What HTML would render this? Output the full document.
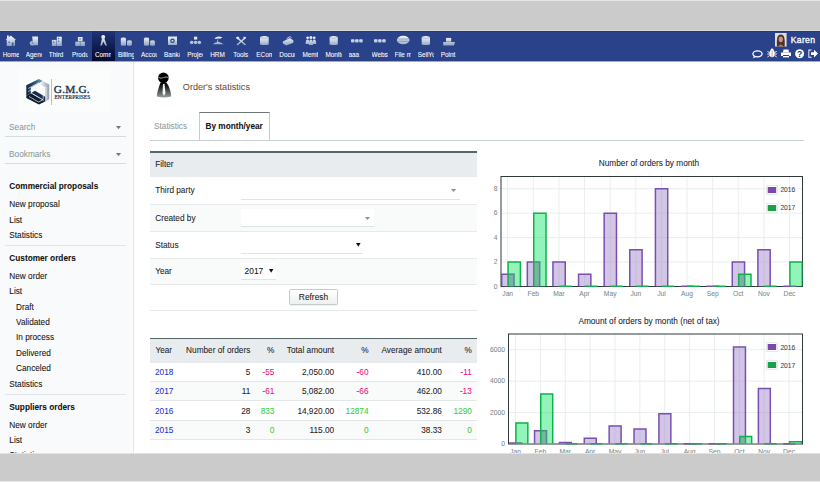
<!DOCTYPE html>
<html><head><meta charset="utf-8">
<style>
html,body{margin:0;padding:0;}
body{width:820px;height:482px;position:relative;overflow:hidden;background:#fff;font-family:"Liberation Sans", sans-serif;}
.t{position:absolute;white-space:nowrap;line-height:10px;-webkit-text-stroke:0.06px currentColor;}
</style></head><body>
<div style="position:absolute;left:0px;top:0px;width:820px;height:31px;background:#cbcbcb;"></div>
<div style="position:absolute;left:0px;top:0px;width:820px;height:1px;background:#e6e6e6;"></div>
<div style="position:absolute;left:0px;top:30px;width:820px;height:1px;background:#d8d8d6;"></div>
<div style="position:absolute;left:0px;top:31px;width:820px;height:30px;background:#29428a;"></div>
<div style="position:absolute;left:0px;top:61px;width:820px;height:1px;background:rgba(40,66,135,0.45);"></div>
<div style="position:absolute;left:0px;top:31px;width:820px;height:1px;background:#223a80;"></div>
<div style="position:absolute;left:92.00px;top:31px;width:22.65px;height:30px;background:linear-gradient(#1f3378,#040a2c);"></div>

<svg style="position:absolute;left:0;top:0" width="470" height="61" viewBox="0 0 470 61">
<defs><linearGradient id="ig" gradientUnits="userSpaceOnUse" x1="0" y1="35" x2="0" y2="46.5"><stop offset="0" stop-color="#f6f8fb"/><stop offset="0.45" stop-color="#cfd9e6"/><stop offset="1" stop-color="#8499bb"/></linearGradient></defs>
<g fill="url(#ig)">
<!-- Home -->
<path d="M5.6 40 L7 38.6 V35.5 H8.8 V37.2 L10.8 35.6 L16.1 40 H14.9 V46 H6.7 V40 Z"/>
<!-- Agenda -->
<path d="M32.2 36.4 H38 V45.2 H33 Z"/><circle cx="32.2" cy="43.3" r="2.4"/>
<!-- Third -->
<rect x="56.8" y="36.7" width="5" height="9.3"/><rect x="51.9" y="39.9" width="4.6" height="6.1"/>
<!-- Produ -->
<rect x="77.9" y="37" width="4.7" height="4.4"/><rect x="75.3" y="41.7" width="4.6" height="4.3"/><rect x="80.3" y="41.7" width="4.6" height="4.3"/>
<!-- Comm -->
<circle cx="103.2" cy="36.9" r="2"/><path d="M102 38.6 H104.4 L107 45.6 H105.3 L103.2 41.5 L102 45.6 H100.3 Z"/>
<!-- Billing -->
<ellipse cx="123.4" cy="38.7" rx="2.6" ry="1.1"/><rect x="120.8" y="38.7" width="5.2" height="6.4"/><ellipse cx="123.4" cy="45.1" rx="2.6" ry="0.6"/><ellipse cx="129.4" cy="41.3" rx="2.4" ry="1.0"/><rect x="127.0" y="41.3" width="4.8" height="3.8"/><ellipse cx="129.4" cy="45.1" rx="2.4" ry="0.6"/>
<!-- Accou -->
<ellipse cx="146.5" cy="38.7" rx="2.6" ry="1.1"/><rect x="143.9" y="38.7" width="5.2" height="6.4"/><ellipse cx="146.5" cy="45.1" rx="2.6" ry="0.6"/><ellipse cx="152.5" cy="41.3" rx="2.4" ry="1.0"/><rect x="150.1" y="41.3" width="4.8" height="3.8"/><ellipse cx="152.5" cy="45.1" rx="2.4" ry="0.6"/>
<!-- Bank -->
<path fill-rule="evenodd" d="M168 36.4 H177 V45.1 H168 Z M172.5 38.5 A2.3 2.3 0 1 0 172.5 43.1 A2.3 2.3 0 1 0 172.5 38.5 Z"/><circle cx="172.5" cy="40.8" r="1.1"/>
<!-- Proje -->
<rect x="194" y="36.7" width="3.2" height="2.9"/><circle cx="191.7" cy="42.5" r="1.8"/><circle cx="195.6" cy="42.5" r="1.8"/><circle cx="199.3" cy="42.5" r="1.8"/>
<!-- HRM -->
<path d="M214.5 38.2 Q218 35.2 222.5 37.5 L220 38.8 Q217.5 38 215.5 39 Z"/><path d="M218 38.6 L217 42 L218.2 42 Z"/><path d="M212.7 44.3 Q216 41.5 219 42 Q221.5 43 223.8 44.3 Z"/>
</g>
<g fill="#3a5290" opacity="0.85">
<rect x="8.3" y="41.6" width="1.6" height="1.2"/><rect x="11.8" y="42.4" width="1.8" height="3.6"/>
<rect x="58" y="38" width="1.2" height="1.2"/><rect x="58" y="40.6" width="1.2" height="1.2"/><rect x="53" y="41.5" width="1.2" height="1.2"/>
<rect x="79.5" y="38.3" width="1.2" height="1.2"/>
<path d="M32.2 41.6 V43.3 H33.6" stroke="#3a5290" stroke-width="0.6" fill="none"/>

</g>
<g fill="url(#ig)">

</g>
<g stroke="url(#ig)" stroke-width="1.6" fill="none">
<!-- Tools -->
<path d="M237 37.5 L245.5 45"/><path d="M245.5 37.5 L237 45"/>
</g>
<g fill="url(#ig)">
<path d="M235.8 37.6 L238.2 36.4 L239.6 38.2 L237.4 39.6 Z"/><path d="M243 36.8 L246.2 37 L244.6 39.4 Z"/>
<!-- ECon -->
<path d="M260 37 Q264.35 35.2 268.7 37 V44.4 Q264.35 45.6 260 44.4 Z"/>
<!-- Docu -->
<path d="M282.8 41.5 L289.8 38 L293.3 40.3 L293.3 42.8 L286.3 45.5 L282.8 43.5 Z"/>
<path d="M286.5 38.5 L290 36.7 L291.5 37.6" stroke="url(#ig)" stroke-width="0.8" fill="none"/>
<!-- Memb -->
<circle cx="307.6" cy="37.8" r="1.4"/><circle cx="314.2" cy="37.8" r="1.4"/><circle cx="310.9" cy="37.4" r="1.5"/>
<path d="M305.6 44 Q305.6 39.6 307.6 39.6 Q309.4 39.6 309.4 44 Z"/>
<path d="M312.4 44 Q312.4 39.6 314.2 39.6 Q316.2 39.6 316.2 44 Z"/>
<path d="M308.8 44.9 Q308.8 39.4 310.9 39.4 Q313 39.4 313 44.9 Z"/>
<!-- Monit -->
<path d="M329.6 37 Q333.7 35.2 337.8 37 V44.4 Q333.7 45.6 329.6 44.4 Z"/>
<!-- aaa -->
<rect x="351" y="39.3" width="3.5" height="3.2" rx="0.8"/><rect x="355.1" y="39.3" width="3.5" height="3.2" rx="0.8"/><rect x="359.2" y="39.3" width="3.5" height="3.2" rx="0.8"/>
<!-- Webs -->
<rect x="374" y="39.3" width="3.5" height="3.2" rx="0.8"/><rect x="378.1" y="39.3" width="3.5" height="3.2" rx="0.8"/><rect x="382.2" y="39.3" width="3.5" height="3.2" rx="0.8"/>
<!-- File -->
<ellipse cx="403.2" cy="40" rx="6.3" ry="4.3"/>
<!-- SellYo -->
<path d="M421.7 37 Q425.85 35.2 430 37 V44.4 Q425.85 45.6 421.7 44.4 Z"/>
<!-- Point -->
<rect x="446" y="37.9" width="5.2" height="3.8"/><path d="M443.2 42 H455 L454 45.5 H443.2 Z"/>
</g>
<path d="M397.5 39 H409 M397.5 41.2 H409" stroke="#5a70a0" stroke-width="0.6" fill="none"/><path d="M260 37.6 Q264.35 39 268.7 37.6 M329.6 37.6 Q333.7 39 337.8 37.6 M421.7 37.6 Q425.85 39 430 37.6" stroke="#7d90b5" stroke-width="0.5" fill="none"/>
</svg>
<div class="t" style="left:2.75px;width:16.1px;overflow:hidden;top:49.75px;font-size:6.4px;color:#fff;">Home</div>
<div class="t" style="left:25.80px;width:16.1px;overflow:hidden;top:49.75px;font-size:6.4px;color:#fff;">Agenda</div>
<div class="t" style="left:48.85px;width:16.1px;overflow:hidden;top:49.75px;font-size:6.4px;color:#fff;">Third parties</div>
<div class="t" style="left:71.90px;width:16.1px;overflow:hidden;top:49.75px;font-size:6.4px;color:#fff;">Products</div>
<div class="t" style="left:94.95px;width:16.1px;overflow:hidden;top:49.75px;font-size:6.4px;color:#fff;">Commercial</div>
<div class="t" style="left:118.00px;width:16.1px;overflow:hidden;top:49.75px;font-size:6.4px;color:#fff;">Billing</div>
<div class="t" style="left:141.05px;width:16.1px;overflow:hidden;top:49.75px;font-size:6.4px;color:#fff;">Accounting</div>
<div class="t" style="left:164.10px;width:16.1px;overflow:hidden;top:49.75px;font-size:6.4px;color:#fff;">Bank/Cash</div>
<div class="t" style="left:187.15px;width:16.1px;overflow:hidden;top:49.75px;font-size:6.4px;color:#fff;">Projects</div>
<div class="t" style="left:210.20px;width:16.1px;overflow:hidden;top:49.75px;font-size:6.4px;color:#fff;">HRM</div>
<div class="t" style="left:233.25px;width:16.1px;overflow:hidden;top:49.75px;font-size:6.4px;color:#fff;">Tools</div>
<div class="t" style="left:256.30px;width:16.1px;overflow:hidden;top:49.75px;font-size:6.4px;color:#fff;">ECommerce</div>
<div class="t" style="left:279.35px;width:16.1px;overflow:hidden;top:49.75px;font-size:6.4px;color:#fff;">Documents</div>
<div class="t" style="left:302.40px;width:16.1px;overflow:hidden;top:49.75px;font-size:6.4px;color:#fff;">Members</div>
<div class="t" style="left:325.45px;width:16.1px;overflow:hidden;top:49.75px;font-size:6.4px;color:#fff;">Monitoring</div>
<div class="t" style="left:348.50px;width:16.1px;overflow:hidden;top:49.75px;font-size:6.4px;color:#fff;">aaa</div>
<div class="t" style="left:371.55px;width:16.1px;overflow:hidden;top:49.75px;font-size:6.4px;color:#fff;">Websites</div>
<div class="t" style="left:394.60px;width:16.1px;overflow:hidden;top:49.75px;font-size:6.4px;color:#fff;">File manager</div>
<div class="t" style="left:417.65px;width:16.1px;overflow:hidden;top:49.75px;font-size:6.4px;color:#fff;">SellYourSaas</div>
<div class="t" style="left:440.70px;width:16.1px;overflow:hidden;top:49.75px;font-size:6.4px;color:#fff;">Point of sale</div>
<svg style="position:absolute;left:775px;top:33px" width="11.6" height="13.5" viewBox="0 0 12 14" preserveAspectRatio="none">
<rect width="12" height="14" fill="#e2ddd8"/>
<path d="M2 14 Q1.5 6 3 3 Q6 0 9 3 Q10.5 6 10 14 Z" fill="#4a3428"/>
<ellipse cx="6" cy="6.5" rx="2.2" ry="3" fill="#c8958a"/>
<path d="M3.5 14 Q6 10 8.5 14 Z" fill="#b08070"/>
</svg>
<div class="t" style="left:790.70px;top:35.25px;font-size:8.6px;color:#fff;letter-spacing:0.35px;-webkit-text-stroke:0.3px #fff;">Karen</div>
<svg style="position:absolute;left:748px;top:46px" width="72" height="16" viewBox="748 46 72 16">
<g fill="none" stroke="#fff" stroke-width="1.3">
<ellipse cx="757.5" cy="53.8" rx="4.6" ry="3"/>
</g>
<path d="M754 56 L752.8 58.6 L756.5 56.6 Z" fill="#fff"/>
<g fill="#fff">
<ellipse cx="772.1" cy="53.5" rx="2.7" ry="3.8"/>
<circle cx="772.1" cy="49.8" r="1.4"/>
</g>
<g stroke="#fff" stroke-width="0.9">
<path d="M767.5 51.5 L769.5 52.5 M767.3 54 H769.5 M767.5 57 L769.5 55.5 M776.7 51.5 L774.7 52.5 M776.9 54 H774.7 M776.7 57 L774.7 55.5"/>
</g>
<path d="M772.1 50.5 V57" stroke="#c05050" stroke-width="0.6"/>
<g fill="#fff">
<path d="M783.5 49.5 H788.5 L789 52.5 H783 Z"/>
<path d="M781 52.5 H791 V56 H789 V55 H783 V56 H781 Z"/>
<rect x="783" y="56" width="6" height="1.4"/>
</g>
<circle cx="799.6" cy="53.7" r="4.5" fill="#fff"/>
<text x="799.7" y="56.9" font-family="Liberation Sans" font-weight="bold" font-size="8.6" fill="#1d2f66" text-anchor="middle">?</text>
<g fill="#fff">
<path d="M811.5 50.5 H809.3 V56.8 H811.5 V57.8 H808.4 V49.5 H811.5 Z"/>
<path d="M811 52.2 H814 V49.8 L818 53.6 L814 57.4 V55 H811 Z"/>
</g>
</svg>
<div style="position:absolute;left:0px;top:62px;width:133px;height:391px;background:#f9fafb;"></div>
<div style="position:absolute;left:133px;top:62px;width:1px;height:391px;background:#e4e7e8;"></div>
<div style="position:absolute;left:19px;top:69px;width:92px;height:43px;background:#fbfcfc;"></div>
<svg style="position:absolute;left:0;top:61px" width="133" height="60" viewBox="0 61 133 60">
<defs>
<linearGradient id="lgA" gradientUnits="userSpaceOnUse" x1="26" y1="0" x2="43" y2="0"><stop offset="0" stop-color="#102238"/><stop offset="0.5" stop-color="#2a5575"/><stop offset="1" stop-color="#7fa6bd"/></linearGradient>
<linearGradient id="lgB" gradientUnits="userSpaceOnUse" x1="41" y1="0" x2="50" y2="0"><stop offset="0" stop-color="#e6ecee"/><stop offset="1" stop-color="#8b9ba3"/></linearGradient>
</defs>
<polygon points="26.3,85.3 38.9,79 42.8,81 30.8,87.6 30.8,93.2 26.3,95.8" fill="url(#lgA)"/>
<polygon points="42.8,81 49.2,84.6 49.2,99.2 45.2,101.6 45.2,87.2 40.6,84.6" fill="url(#lgB)"/>
<polygon points="26.3,95.8 30.8,93.2 45.2,101.6 38.9,104.5 26.3,97.9" fill="#0e1d31"/>
<polygon points="31.5,92.8 35,90.8 45.2,96.8 45.2,101.6" fill="#16304a"/>
<g stroke="#eef3f5" stroke-width="0.7" fill="none">
<path d="M28.2 88.5 L39 82.6 M28.2 91.5 L35.5 87.5 V90"/>
<path d="M43.2 86 V99.5 M46.2 86.5 V99.8"/>
<path d="M29 96.5 L38.5 102 L43 99.8 L33.5 94.3"/>
</g>
<rect x="51.2" y="79" width="0.8" height="26" fill="#a7b5bf"/>
</svg>
<div class="t" style="left:53.8px;top:84.28px;font-family:'Liberation Serif',serif;font-size:11.3px;color:#1a2f4a;letter-spacing:0.2px;-webkit-text-stroke:0.35px #1a2f4a;">G.M.G.</div>
<div class="t" style="left:54.5px;top:91.90px;font-family:'Liberation Serif',serif;font-size:5.3px;color:#1a2f4a;letter-spacing:0.12px;-webkit-text-stroke:0.2px #1a2f4a;">ENTERPRISES</div>
<div class="t" style="left:9.10px;top:122.75px;font-size:8.25px;color:#8c9a9c;">Search</div>
<div style="position:absolute;left:5px;top:136px;width:121px;height:1px;background:#d5dcdc;"></div>
<div class="t" style="left:9.10px;top:149.75px;font-size:8.25px;color:#8c9a9c;">Bookmarks</div>
<div style="position:absolute;left:5px;top:163px;width:121px;height:1px;background:#d5dcdc;"></div>
<svg style="position:absolute;left:116px;top:125.8px" width="6" height="4"><path d="M0 0 H5 L2.5 3.2 Z" fill="#6f7a7c"/></svg>
<svg style="position:absolute;left:116px;top:152.8px" width="6" height="4"><path d="M0 0 H5 L2.5 3.2 Z" fill="#6f7a7c"/></svg>
<div class="t" style="left:9.30px;top:181.75px;font-size:8.25px;color:#111;font-weight:bold;">Commercial proposals</div>
<div class="t" style="left:9.30px;top:199.75px;font-size:8.25px;color:#111;">New proposal</div>
<div class="t" style="left:9.30px;top:215.75px;font-size:8.25px;color:#111;">List</div>
<div class="t" style="left:9.30px;top:230.75px;font-size:8.25px;color:#111;">Statistics</div>
<div class="t" style="left:9.30px;top:253.75px;font-size:8.25px;color:#111;font-weight:bold;">Customer orders</div>
<div class="t" style="left:9.30px;top:271.75px;font-size:8.25px;color:#111;">New order</div>
<div class="t" style="left:9.30px;top:286.75px;font-size:8.25px;color:#111;">List</div>
<div class="t" style="left:16.00px;top:302.75px;font-size:8.25px;color:#111;">Draft</div>
<div class="t" style="left:16.00px;top:317.75px;font-size:8.25px;color:#111;">Validated</div>
<div class="t" style="left:16.00px;top:332.75px;font-size:8.25px;color:#111;">In process</div>
<div class="t" style="left:16.00px;top:348.75px;font-size:8.25px;color:#111;">Delivered</div>
<div class="t" style="left:16.00px;top:363.75px;font-size:8.25px;color:#111;">Canceled</div>
<div class="t" style="left:9.30px;top:379.75px;font-size:8.25px;color:#111;">Statistics</div>
<div class="t" style="left:9.30px;top:402.75px;font-size:8.25px;color:#111;font-weight:bold;">Suppliers orders</div>
<div class="t" style="left:9.30px;top:420.75px;font-size:8.25px;color:#111;">New order</div>
<div class="t" style="left:9.30px;top:435.75px;font-size:8.25px;color:#111;">List</div>
<div class="t" style="left:9.30px;top:450.75px;font-size:8.25px;color:#111;">Statistics</div>
<div style="position:absolute;left:5px;top:245px;width:121px;height:1px;background:#e3e6e8;"></div>
<div style="position:absolute;left:5px;top:394px;width:121px;height:1px;background:#e3e6e8;"></div>
<svg style="position:absolute;left:155px;top:71px" width="19" height="28" viewBox="0 0 19 28">
<defs><linearGradient id="pg" x1="0" y1="0" x2="0" y2="1"><stop offset="0" stop-color="#000"/><stop offset="0.25" stop-color="#1a1a1a"/><stop offset="1" stop-color="#93a3a3"/></linearGradient></defs>
<circle cx="8.4" cy="6.8" r="5.3" fill="#000"/>
<path d="M3.5 6.5 Q6 8 8.5 6.5 Q11 5.5 13.5 6.5" stroke="#b8c0c0" stroke-width="0.8" fill="none"/>
<path d="M5.5 11.5 L11.5 11.5 Q13.5 14 15 19 Q16.5 24 16 25.5 Q8.5 27.5 2 25.5 Q1.5 24 3 19 Q4.5 14 5.5 11.5 Z" fill="url(#pg)"/>
<path d="M8 13 L9.5 13 L10.5 22 L9 25 L7.5 22 Z" fill="#fff" opacity="0.95"/>
</svg>
<div class="t" style="left:182.80px;top:82.25px;font-size:9.15px;color:#6e5035;">Order's statistics</div>
<div class="t" style="left:154.00px;top:121.75px;font-size:8.25px;color:#8e9a9a;">Statistics</div>
<div style="position:absolute;left:199px;top:112px;width:70.5px;height:28px;box-sizing:border-box;border:1px solid #c5cccc;border-top:1px solid #6e7878;border-bottom:none;background:#fff;"></div>
<div class="t" style="left:205.50px;top:121.75px;font-size:8.25px;color:#111;font-weight:bold;">By month/year</div>
<div style="position:absolute;left:150px;top:140px;width:654px;height:1px;background:#c9d0d0;"></div>
<div style="position:absolute;left:150px;top:151px;width:327px;height:1.5px;background:#56676a;"></div>
<div style="position:absolute;left:150px;top:152.5px;width:327px;height:24px;background:#e9ecef;"></div>
<div class="t" style="left:155.20px;top:159.75px;font-size:8.25px;color:#222;">Filter</div>
<div style="position:absolute;left:150px;top:176.5px;width:327px;height:27.5px;background:#fff;"></div>
<div style="position:absolute;left:150px;top:204px;width:327px;height:27px;background:#f9fafa;"></div>
<div style="position:absolute;left:150px;top:231px;width:327px;height:27px;background:#fff;"></div>
<div style="position:absolute;left:150px;top:258px;width:327px;height:26px;background:#f9fafa;"></div>
<div style="position:absolute;left:150px;top:284px;width:327px;height:26px;background:#fff;"></div>
<div style="position:absolute;left:150px;top:204px;width:327px;height:1px;background:#e6eaea;"></div>
<div style="position:absolute;left:150px;top:231px;width:327px;height:1px;background:#e6eaea;"></div>
<div style="position:absolute;left:150px;top:258px;width:327px;height:1px;background:#e6eaea;"></div>
<div style="position:absolute;left:150px;top:284px;width:327px;height:1px;background:#e6eaea;"></div>
<div style="position:absolute;left:150px;top:310px;width:327px;height:1px;background:#e6eaea;"></div>
<div class="t" style="left:155.20px;top:185.75px;font-size:8.25px;color:#222;">Third party</div>
<div class="t" style="left:155.20px;top:213.75px;font-size:8.25px;color:#222;">Created by</div>
<div class="t" style="left:155.20px;top:240.75px;font-size:8.25px;color:#222;">Status</div>
<div class="t" style="left:155.20px;top:266.75px;font-size:8.25px;color:#222;">Year</div>
<div style="position:absolute;left:241px;top:182px;width:219px;height:18px;background:#fff;border-bottom:1px solid #dfe4e4;box-sizing:border-box;"></div>
<div style="position:absolute;left:241px;top:209px;width:133px;height:18px;background:#fff;border-bottom:1px solid #dfe4e4;box-sizing:border-box;"></div>
<div style="position:absolute;left:241px;top:236px;width:122px;height:18px;background:#fff;border-bottom:1px solid #dfe4e4;box-sizing:border-box;"></div>
<div style="position:absolute;left:241px;top:263px;width:35px;height:17px;background:#fff;border-bottom:1px solid #dfe4e4;box-sizing:border-box;"></div>
<svg style="position:absolute;left:451px;top:188.9px" width="6" height="4"><path d="M0 0 H5.2 L2.6 3.1 Z" fill="#849494"/></svg>
<svg style="position:absolute;left:365.2px;top:216.7px" width="6" height="4"><path d="M0 0 H5 L2.5 3 Z" fill="#849494"/></svg>
<svg style="position:absolute;left:355.8px;top:243px" width="6" height="5"><path d="M0 0 H4.6 L2.3 3.8 Z" fill="#111"/></svg>
<div class="t" style="left:244.60px;top:266.25px;font-size:8.4px;color:#111;">2017</div>
<svg style="position:absolute;left:268.7px;top:269.1px" width="6" height="5"><path d="M0 0 H4.4 L2.2 3.8 Z" fill="#111"/></svg>
<div style="position:absolute;left:289px;top:289.3px;width:48.8px;height:15.5px;box-sizing:border-box;border:1px solid #c5caca;border-radius:1.5px;background:linear-gradient(#fff,#eef0f0);box-shadow:0 0.5px 0.5px rgba(0,0,0,0.12);"></div>
<div class="t" style="left:213.50px;width:200px;text-align:center;top:292.25px;font-size:8.4px;color:#222;">Refresh</div>
<div style="position:absolute;left:150px;top:337.5px;width:327px;height:1.5px;background:#56676a;"></div>
<div style="position:absolute;left:150px;top:339px;width:327px;height:23.5px;background:#e9ecef;"></div>
<div class="t" style="left:155.40px;top:345.75px;font-size:8.25px;color:#222;">Year</div>
<div class="t" style="right:569.70px;top:345.75px;font-size:8.25px;color:#222;">Number of orders</div>
<div class="t" style="right:545.60px;top:345.75px;font-size:8.25px;color:#222;">%</div>
<div class="t" style="right:485.90px;top:345.75px;font-size:8.25px;color:#222;">Total amount</div>
<div class="t" style="right:451.50px;top:345.75px;font-size:8.25px;color:#222;">%</div>
<div class="t" style="right:378.10px;top:345.75px;font-size:8.25px;color:#222;">Average amount</div>
<div class="t" style="right:348.20px;top:345.75px;font-size:8.25px;color:#222;">%</div>
<div style="position:absolute;left:150px;top:362.5px;width:327px;height:19.0px;background:#fff;"></div>
<div style="position:absolute;left:150px;top:380.5px;width:327px;height:1px;background:#e3e7e7;"></div>
<div class="t" style="left:155.00px;top:367.75px;font-size:8.25px;color:#2233c8;">2018</div>
<div class="t" style="right:569.70px;top:367.75px;font-size:8.25px;color:#222;">5</div>
<div class="t" style="right:545.60px;top:367.75px;font-size:8.25px;color:#ee0a80;">-55</div>
<div class="t" style="right:485.90px;top:367.75px;font-size:8.25px;color:#222;">2,050.00</div>
<div class="t" style="right:451.50px;top:367.75px;font-size:8.25px;color:#ee0a80;">-60</div>
<div class="t" style="right:378.10px;top:367.75px;font-size:8.25px;color:#222;">410.00</div>
<div class="t" style="right:348.20px;top:367.75px;font-size:8.25px;color:#ee0a80;">-11</div>
<div style="position:absolute;left:150px;top:381.5px;width:327px;height:19.5px;background:#f9fafa;"></div>
<div style="position:absolute;left:150px;top:400px;width:327px;height:1px;background:#e3e7e7;"></div>
<div class="t" style="left:155.00px;top:386.75px;font-size:8.25px;color:#2233c8;">2017</div>
<div class="t" style="right:569.70px;top:386.75px;font-size:8.25px;color:#222;">11</div>
<div class="t" style="right:545.60px;top:386.75px;font-size:8.25px;color:#ee0a80;">-61</div>
<div class="t" style="right:485.90px;top:386.75px;font-size:8.25px;color:#222;">5,082.00</div>
<div class="t" style="right:451.50px;top:386.75px;font-size:8.25px;color:#ee0a80;">-66</div>
<div class="t" style="right:378.10px;top:386.75px;font-size:8.25px;color:#222;">462.00</div>
<div class="t" style="right:348.20px;top:386.75px;font-size:8.25px;color:#ee0a80;">-13</div>
<div style="position:absolute;left:150px;top:401px;width:327px;height:19.5px;background:#fff;"></div>
<div style="position:absolute;left:150px;top:419.5px;width:327px;height:1px;background:#e3e7e7;"></div>
<div class="t" style="left:155.00px;top:406.75px;font-size:8.25px;color:#2233c8;">2016</div>
<div class="t" style="right:569.70px;top:406.75px;font-size:8.25px;color:#222;">28</div>
<div class="t" style="right:545.60px;top:406.75px;font-size:8.25px;color:#38cc38;">833</div>
<div class="t" style="right:485.90px;top:406.75px;font-size:8.25px;color:#222;">14,920.00</div>
<div class="t" style="right:451.50px;top:406.75px;font-size:8.25px;color:#38cc38;">12874</div>
<div class="t" style="right:378.10px;top:406.75px;font-size:8.25px;color:#222;">532.86</div>
<div class="t" style="right:348.20px;top:406.75px;font-size:8.25px;color:#38cc38;">1290</div>
<div style="position:absolute;left:150px;top:420.5px;width:327px;height:19.0px;background:#f9fafa;"></div>
<div style="position:absolute;left:150px;top:438.5px;width:327px;height:1px;background:#e3e7e7;"></div>
<div class="t" style="left:155.00px;top:425.75px;font-size:8.25px;color:#2233c8;">2015</div>
<div class="t" style="right:569.70px;top:425.75px;font-size:8.25px;color:#222;">3</div>
<div class="t" style="right:545.60px;top:425.75px;font-size:8.25px;color:#38cc38;">0</div>
<div class="t" style="right:485.90px;top:425.75px;font-size:8.25px;color:#222;">115.00</div>
<div class="t" style="right:451.50px;top:425.75px;font-size:8.25px;color:#38cc38;">0</div>
<div class="t" style="right:378.10px;top:425.75px;font-size:8.25px;color:#222;">38.33</div>
<div class="t" style="right:348.20px;top:425.75px;font-size:8.25px;color:#38cc38;">0</div>
<div class="t" style="left:549.00px;width:200px;text-align:center;top:158.75px;font-size:8.25px;color:#1e2230;">Number of orders by month</div>
<svg style="position:absolute;left:0;top:0" width="820" height="482"><line x1="507.70" y1="176.5" x2="507.70" y2="286.5" stroke="#e9eeee" stroke-width="1"/><line x1="533.32" y1="176.5" x2="533.32" y2="286.5" stroke="#e9eeee" stroke-width="1"/><line x1="558.94" y1="176.5" x2="558.94" y2="286.5" stroke="#e9eeee" stroke-width="1"/><line x1="584.56" y1="176.5" x2="584.56" y2="286.5" stroke="#e9eeee" stroke-width="1"/><line x1="610.18" y1="176.5" x2="610.18" y2="286.5" stroke="#e9eeee" stroke-width="1"/><line x1="635.80" y1="176.5" x2="635.80" y2="286.5" stroke="#e9eeee" stroke-width="1"/><line x1="661.42" y1="176.5" x2="661.42" y2="286.5" stroke="#e9eeee" stroke-width="1"/><line x1="687.04" y1="176.5" x2="687.04" y2="286.5" stroke="#e9eeee" stroke-width="1"/><line x1="712.66" y1="176.5" x2="712.66" y2="286.5" stroke="#e9eeee" stroke-width="1"/><line x1="738.28" y1="176.5" x2="738.28" y2="286.5" stroke="#e9eeee" stroke-width="1"/><line x1="763.90" y1="176.5" x2="763.90" y2="286.5" stroke="#e9eeee" stroke-width="1"/><line x1="789.52" y1="176.5" x2="789.52" y2="286.5" stroke="#e9eeee" stroke-width="1"/><line x1="501" y1="262.06" x2="802.5" y2="262.06" stroke="#e9eeee" stroke-width="1"/><line x1="501" y1="237.61" x2="802.5" y2="237.61" stroke="#e9eeee" stroke-width="1"/><line x1="501" y1="213.17" x2="802.5" y2="213.17" stroke="#e9eeee" stroke-width="1"/><line x1="501" y1="188.72" x2="802.5" y2="188.72" stroke="#e9eeee" stroke-width="1"/><rect x="501" y="176.5" width="301.5" height="110.0" fill="none" stroke="#2f3a3a" stroke-width="1"/><clipPath id="cp176"><rect x="501" y="176.5" width="301.5" height="111.0"/></clipPath><g clip-path="url(#cp176)"><g fill="rgba(155,128,199,0.45)"><rect x="501.69" y="274.28" width="12.31" height="12.22"/><rect x="527.31" y="262.06" width="12.31" height="24.44"/><rect x="552.93" y="262.06" width="12.31" height="24.44"/><rect x="578.55" y="274.28" width="12.31" height="12.22"/><rect x="604.17" y="213.17" width="12.31" height="73.33"/><rect x="629.79" y="249.83" width="12.31" height="36.67"/><rect x="655.41" y="188.72" width="12.31" height="97.78"/><rect x="732.27" y="262.06" width="12.31" height="24.44"/><rect x="757.89" y="249.83" width="12.31" height="36.67"/></g><g fill="none" stroke="#7b4fb0" stroke-width="1.5"><path d="M501.69 286.00 V274.28 H514.00 V286.00"/><path d="M527.31 286.00 V262.06 H539.62 V286.00"/><path d="M552.93 286.00 V262.06 H565.24 V286.00"/><path d="M578.55 286.00 V274.28 H590.86 V286.00"/><path d="M604.17 286.00 V213.17 H616.48 V286.00"/><path d="M629.79 286.00 V249.83 H642.10 V286.00"/><path d="M655.41 286.00 V188.72 H667.72 V286.00"/><path d="M681.03 286.30 H693.34"/><path d="M706.65 286.30 H718.96"/><path d="M732.27 286.00 V262.06 H744.58 V286.00"/><path d="M757.89 286.00 V249.83 H770.20 V286.00"/><path d="M783.51 286.30 H795.82"/></g><g fill="rgba(13,231,97,0.45)"><rect x="508.10" y="262.06" width="12.31" height="24.44"/><rect x="533.72" y="213.17" width="12.31" height="73.33"/><rect x="738.68" y="274.28" width="12.31" height="12.22"/><rect x="789.92" y="262.06" width="12.31" height="24.44"/></g><g fill="rgba(110,125,150,0.35)"><rect x="508.10" y="273.53" width="6.66" height="12.97"/><rect x="533.72" y="261.31" width="6.65" height="25.19"/><rect x="738.68" y="274.28" width="6.65" height="12.22"/></g><g fill="none" stroke="#12b04c" stroke-width="1.5"><path d="M508.10 286.00 V262.06 H520.41 V286.00"/><path d="M533.72 286.00 V213.17 H546.03 V286.00"/><path d="M559.34 286.30 H571.65"/><path d="M584.96 286.30 H597.27"/><path d="M610.58 286.30 H622.89"/><path d="M636.20 286.30 H648.51"/><path d="M661.82 286.30 H674.13"/><path d="M687.44 286.30 H699.75"/><path d="M713.06 286.30 H725.37"/><path d="M738.68 286.00 V274.28 H750.99 V286.00"/><path d="M764.30 286.30 H776.61"/><path d="M789.92 286.00 V262.06 H802.23 V286.00"/></g></g><rect x="766.5" y="185.50" width="11" height="9" fill="#fff" stroke="#e2e6e6" stroke-width="0.8"/><rect x="767.7" y="187.00" width="8.5" height="6" fill="#7a4aa8"/><rect x="766.5" y="203.50" width="11" height="9" fill="#fff" stroke="#e2e6e6" stroke-width="0.8"/><rect x="767.7" y="205.00" width="8.5" height="6" fill="#1a9e48"/></svg>
<div class="t" style="left:780.40px;top:184.75px;font-size:6.7px;color:#444;">2016</div>
<div class="t" style="left:780.40px;top:202.75px;font-size:6.7px;color:#444;">2017</div>
<div class="t" style="right:322.50px;top:281.75px;font-size:6.7px;color:#7b8a8a;">0</div>
<div class="t" style="right:322.50px;top:256.75px;font-size:6.7px;color:#7b8a8a;">2</div>
<div class="t" style="right:322.50px;top:232.75px;font-size:6.7px;color:#7b8a8a;">4</div>
<div class="t" style="right:322.50px;top:207.75px;font-size:6.7px;color:#7b8a8a;">6</div>
<div class="t" style="right:322.50px;top:183.75px;font-size:6.7px;color:#7b8a8a;">8</div>
<div class="t" style="left:407.70px;width:200px;text-align:center;top:288.75px;font-size:6.7px;color:#7b8a8a;">Jan</div>
<div class="t" style="left:433.32px;width:200px;text-align:center;top:288.75px;font-size:6.7px;color:#7b8a8a;">Feb</div>
<div class="t" style="left:458.94px;width:200px;text-align:center;top:288.75px;font-size:6.7px;color:#7b8a8a;">Mar</div>
<div class="t" style="left:484.56px;width:200px;text-align:center;top:288.75px;font-size:6.7px;color:#7b8a8a;">Apr</div>
<div class="t" style="left:510.18px;width:200px;text-align:center;top:288.75px;font-size:6.7px;color:#7b8a8a;">May</div>
<div class="t" style="left:535.80px;width:200px;text-align:center;top:288.75px;font-size:6.7px;color:#7b8a8a;">Jun</div>
<div class="t" style="left:561.42px;width:200px;text-align:center;top:288.75px;font-size:6.7px;color:#7b8a8a;">Jul</div>
<div class="t" style="left:587.04px;width:200px;text-align:center;top:288.75px;font-size:6.7px;color:#7b8a8a;">Aug</div>
<div class="t" style="left:612.66px;width:200px;text-align:center;top:288.75px;font-size:6.7px;color:#7b8a8a;">Sep</div>
<div class="t" style="left:638.28px;width:200px;text-align:center;top:288.75px;font-size:6.7px;color:#7b8a8a;">Oct</div>
<div class="t" style="left:663.90px;width:200px;text-align:center;top:288.75px;font-size:6.7px;color:#7b8a8a;">Nov</div>
<div class="t" style="left:689.52px;width:200px;text-align:center;top:288.75px;font-size:6.7px;color:#7b8a8a;">Dec</div>
<div class="t" style="left:549.00px;width:200px;text-align:center;top:316.75px;font-size:8.25px;color:#1e2230;">Amount of orders by month (net of tax)</div>
<svg style="position:absolute;left:0;top:0" width="820" height="482"><line x1="515.50" y1="334" x2="515.50" y2="444" stroke="#e9eeee" stroke-width="1"/><line x1="540.37" y1="334" x2="540.37" y2="444" stroke="#e9eeee" stroke-width="1"/><line x1="565.24" y1="334" x2="565.24" y2="444" stroke="#e9eeee" stroke-width="1"/><line x1="590.11" y1="334" x2="590.11" y2="444" stroke="#e9eeee" stroke-width="1"/><line x1="614.98" y1="334" x2="614.98" y2="444" stroke="#e9eeee" stroke-width="1"/><line x1="639.85" y1="334" x2="639.85" y2="444" stroke="#e9eeee" stroke-width="1"/><line x1="664.72" y1="334" x2="664.72" y2="444" stroke="#e9eeee" stroke-width="1"/><line x1="689.59" y1="334" x2="689.59" y2="444" stroke="#e9eeee" stroke-width="1"/><line x1="714.46" y1="334" x2="714.46" y2="444" stroke="#e9eeee" stroke-width="1"/><line x1="739.33" y1="334" x2="739.33" y2="444" stroke="#e9eeee" stroke-width="1"/><line x1="764.20" y1="334" x2="764.20" y2="444" stroke="#e9eeee" stroke-width="1"/><line x1="789.07" y1="334" x2="789.07" y2="444" stroke="#e9eeee" stroke-width="1"/><line x1="508.5" y1="412.57" x2="802.5" y2="412.57" stroke="#e9eeee" stroke-width="1"/><line x1="508.5" y1="381.14" x2="802.5" y2="381.14" stroke="#e9eeee" stroke-width="1"/><line x1="508.5" y1="349.71" x2="802.5" y2="349.71" stroke="#e9eeee" stroke-width="1"/><rect x="508.5" y="334" width="294.0" height="110" fill="none" stroke="#2f3a3a" stroke-width="1"/><clipPath id="cp334"><rect x="508.5" y="334" width="294.0" height="111"/></clipPath><g clip-path="url(#cp334)"><g fill="rgba(155,128,199,0.45)"><rect x="509.68" y="443.06" width="11.94" height="0.94"/><rect x="534.55" y="430.64" width="11.94" height="13.36"/><rect x="559.42" y="442.43" width="11.94" height="1.57"/><rect x="584.29" y="438.19" width="11.94" height="5.81"/><rect x="609.16" y="426.09" width="11.94" height="17.91"/><rect x="634.03" y="428.91" width="11.94" height="15.09"/><rect x="658.90" y="413.67" width="11.94" height="30.33"/><rect x="733.51" y="346.89" width="11.94" height="97.11"/><rect x="758.38" y="388.53" width="11.94" height="55.47"/></g><g fill="none" stroke="#7b4fb0" stroke-width="1.5"><path d="M509.68 443.50 V443.06 H521.62 V443.50"/><path d="M534.55 443.50 V430.64 H546.49 V443.50"/><path d="M559.42 443.50 V442.43 H571.36 V443.50"/><path d="M584.29 443.50 V438.19 H596.23 V443.50"/><path d="M609.16 443.50 V426.09 H621.10 V443.50"/><path d="M634.03 443.50 V428.91 H645.97 V443.50"/><path d="M658.90 443.50 V413.67 H670.84 V443.50"/><path d="M683.77 443.80 H695.71"/><path d="M708.64 443.80 H720.58"/><path d="M733.51 443.50 V346.89 H745.45 V443.50"/><path d="M758.38 443.50 V388.53 H770.32 V443.50"/><path d="M783.25 443.80 H795.19"/></g><g fill="rgba(13,231,97,0.45)"><rect x="515.90" y="422.94" width="11.94" height="21.06"/><rect x="540.77" y="394.11" width="11.94" height="49.89"/><rect x="739.73" y="436.61" width="11.94" height="7.39"/><rect x="789.47" y="441.64" width="11.94" height="2.36"/></g><g fill="rgba(110,125,150,0.35)"><rect x="515.90" y="442.31" width="6.47" height="1.69"/><rect x="540.77" y="429.89" width="6.47" height="14.11"/><rect x="739.73" y="436.61" width="6.47" height="7.39"/></g><g fill="none" stroke="#12b04c" stroke-width="1.5"><path d="M515.90 443.50 V422.94 H527.83 V443.50"/><path d="M540.77 443.50 V394.11 H552.70 V443.50"/><path d="M565.64 443.80 H577.57"/><path d="M590.51 443.80 H602.44"/><path d="M615.38 443.80 H627.31"/><path d="M640.25 443.80 H652.18"/><path d="M665.12 443.80 H677.05"/><path d="M689.99 443.80 H701.92"/><path d="M714.86 443.80 H726.79"/><path d="M739.73 443.50 V436.61 H751.66 V443.50"/><path d="M764.60 443.80 H776.53"/><path d="M789.47 443.50 V441.64 H801.40 V443.50"/></g></g><rect x="766.5" y="342.50" width="11" height="9" fill="#fff" stroke="#e2e6e6" stroke-width="0.8"/><rect x="767.7" y="344.00" width="8.5" height="6" fill="#7a4aa8"/><rect x="766.5" y="360.50" width="11" height="9" fill="#fff" stroke="#e2e6e6" stroke-width="0.8"/><rect x="767.7" y="362.00" width="8.5" height="6" fill="#1a9e48"/></svg>
<div class="t" style="left:780.40px;top:342.75px;font-size:6.7px;color:#444;">2016</div>
<div class="t" style="left:780.40px;top:360.75px;font-size:6.7px;color:#444;">2017</div>
<div class="t" style="right:315.00px;top:438.75px;font-size:6.7px;color:#7b8a8a;">0</div>
<div class="t" style="right:315.00px;top:407.75px;font-size:6.7px;color:#7b8a8a;">2000</div>
<div class="t" style="right:315.00px;top:375.75px;font-size:6.7px;color:#7b8a8a;">4000</div>
<div class="t" style="right:315.00px;top:344.75px;font-size:6.7px;color:#7b8a8a;">6000</div>
<div class="t" style="left:415.50px;width:200px;text-align:center;top:446.75px;font-size:6.7px;color:#7b8a8a;">Jan</div>
<div class="t" style="left:440.37px;width:200px;text-align:center;top:446.75px;font-size:6.7px;color:#7b8a8a;">Feb</div>
<div class="t" style="left:465.24px;width:200px;text-align:center;top:446.75px;font-size:6.7px;color:#7b8a8a;">Mar</div>
<div class="t" style="left:490.11px;width:200px;text-align:center;top:446.75px;font-size:6.7px;color:#7b8a8a;">Apr</div>
<div class="t" style="left:514.98px;width:200px;text-align:center;top:446.75px;font-size:6.7px;color:#7b8a8a;">May</div>
<div class="t" style="left:539.85px;width:200px;text-align:center;top:446.75px;font-size:6.7px;color:#7b8a8a;">Jun</div>
<div class="t" style="left:564.72px;width:200px;text-align:center;top:446.75px;font-size:6.7px;color:#7b8a8a;">Jul</div>
<div class="t" style="left:589.59px;width:200px;text-align:center;top:446.75px;font-size:6.7px;color:#7b8a8a;">Aug</div>
<div class="t" style="left:614.46px;width:200px;text-align:center;top:446.75px;font-size:6.7px;color:#7b8a8a;">Sep</div>
<div class="t" style="left:639.33px;width:200px;text-align:center;top:446.75px;font-size:6.7px;color:#7b8a8a;">Oct</div>
<div class="t" style="left:664.20px;width:200px;text-align:center;top:446.75px;font-size:6.7px;color:#7b8a8a;">Nov</div>
<div class="t" style="left:689.07px;width:200px;text-align:center;top:446.75px;font-size:6.7px;color:#7b8a8a;">Dec</div>
<div style="position:absolute;left:0px;top:453px;width:820px;height:1px;background:#e2e2e2;"></div>
<div style="position:absolute;left:0px;top:454px;width:820px;height:27px;background:#cbcbcb;"></div>
<div style="position:absolute;left:0px;top:481px;width:820px;height:1px;background:#e5e5e5;"></div>
</body></html>
